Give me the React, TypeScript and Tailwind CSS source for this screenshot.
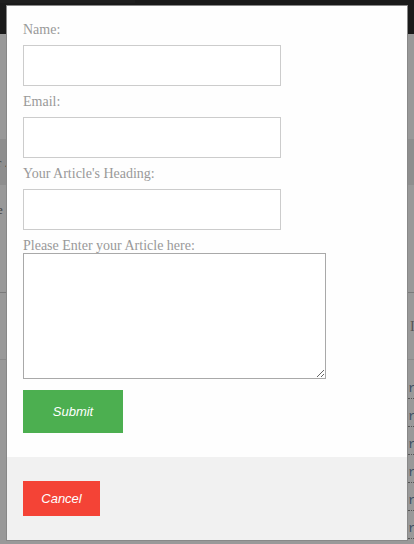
import React from "react";

const serif = { fontFamily: '"Liberation Serif", "Times New Roman", serif' };

function Field({ label }: { label: string }) {
  return (
    <>
      <label className="block h-[15px] text-[14px] leading-[15px] text-[#999]" style={serif}>
        {label}
      </label>
      <input
        type="text"
        className="block w-[258px] h-[41px] mt-2 mb-2 border border-[#ccc] bg-white outline-none"
      />
    </>
  );
}

export default function App() {
  const reRows = [0, 1, 2, 3, 4, 5];
  return (
    <div className="relative w-[414px] h-[544px] overflow-hidden bg-[#999]">
      {/* page behind overlay */}
      <div className="flex flex-col w-full" style={{ fontFamily: '"Liberation Serif", serif' }}>
        <div className="h-[34px] bg-[#1a1a1a] flex flex-col">
          <div className="h-[3px] w-[135px] bg-[#1e1e1e]" />
        </div>
        <div className="h-[105px]" />
        <div className="h-[46px] bg-[#8e8e8e] flex items-center text-[13px] text-[#444] leading-none">
          <span className="-ml-[3px]">r .</span>
        </div>
        <div className="h-[107px] pt-[18px] text-[13px] text-[#444] leading-none">
          <span className="-ml-[3px]">e</span>
        </div>
        <div className="h-px bg-[#7a7a7a]" />
        <div className="h-[66px] flex items-center pl-[410px] text-[14px] text-[#555]">I</div>
        <div className="h-px bg-[#8a8a8a]" />
        <div className="flex flex-col pt-[22px] pl-[408px]">
          {reRows.map((i) => (
            <div key={i} className="h-[28px] flex flex-col">
              <span className="text-[13px] leading-[13px] text-[#3d4f63]" style={{ fontFamily: '"Liberation Mono", monospace' }}>
                re
              </span>
              <div className="mt-[3px] h-px border-t border-dotted border-[#555] w-[10px]" />
            </div>
          ))}
        </div>
      </div>

      {/* modal */}
      <div className="absolute left-[6px] top-[5px] w-[402px] border border-[#888] bg-[#fefefe]">
        <div className="pt-[16px] px-4 pb-6">
          <Field label="Name:" />
          <Field label="Email:" />
          <Field label="Your Article's Heading:" />
          <label className="block h-[15px] text-[14px] leading-[15px] text-[#999]" style={serif}>
            Please Enter your Article here:
          </label>
          <textarea className="block w-[303px] h-[126px] border border-[#a9a9a9] bg-white outline-none" />
          <button
            className="mt-[11px] block w-[100px] h-[43px] bg-[#4caf50] text-white italic text-[13px]"
            style={{ fontFamily: '"Liberation Sans", Arial, sans-serif' }}
          >
            Submit
          </button>
        </div>
        <div className="bg-[#f1f1f1] px-4 py-6">
          <button
            className="block w-[77px] h-[35px] bg-[#f44336] text-white italic text-[13px]"
            style={{ fontFamily: '"Liberation Sans", Arial, sans-serif' }}
          >
            Cancel
          </button>
        </div>
      </div>
    </div>
  );
}
